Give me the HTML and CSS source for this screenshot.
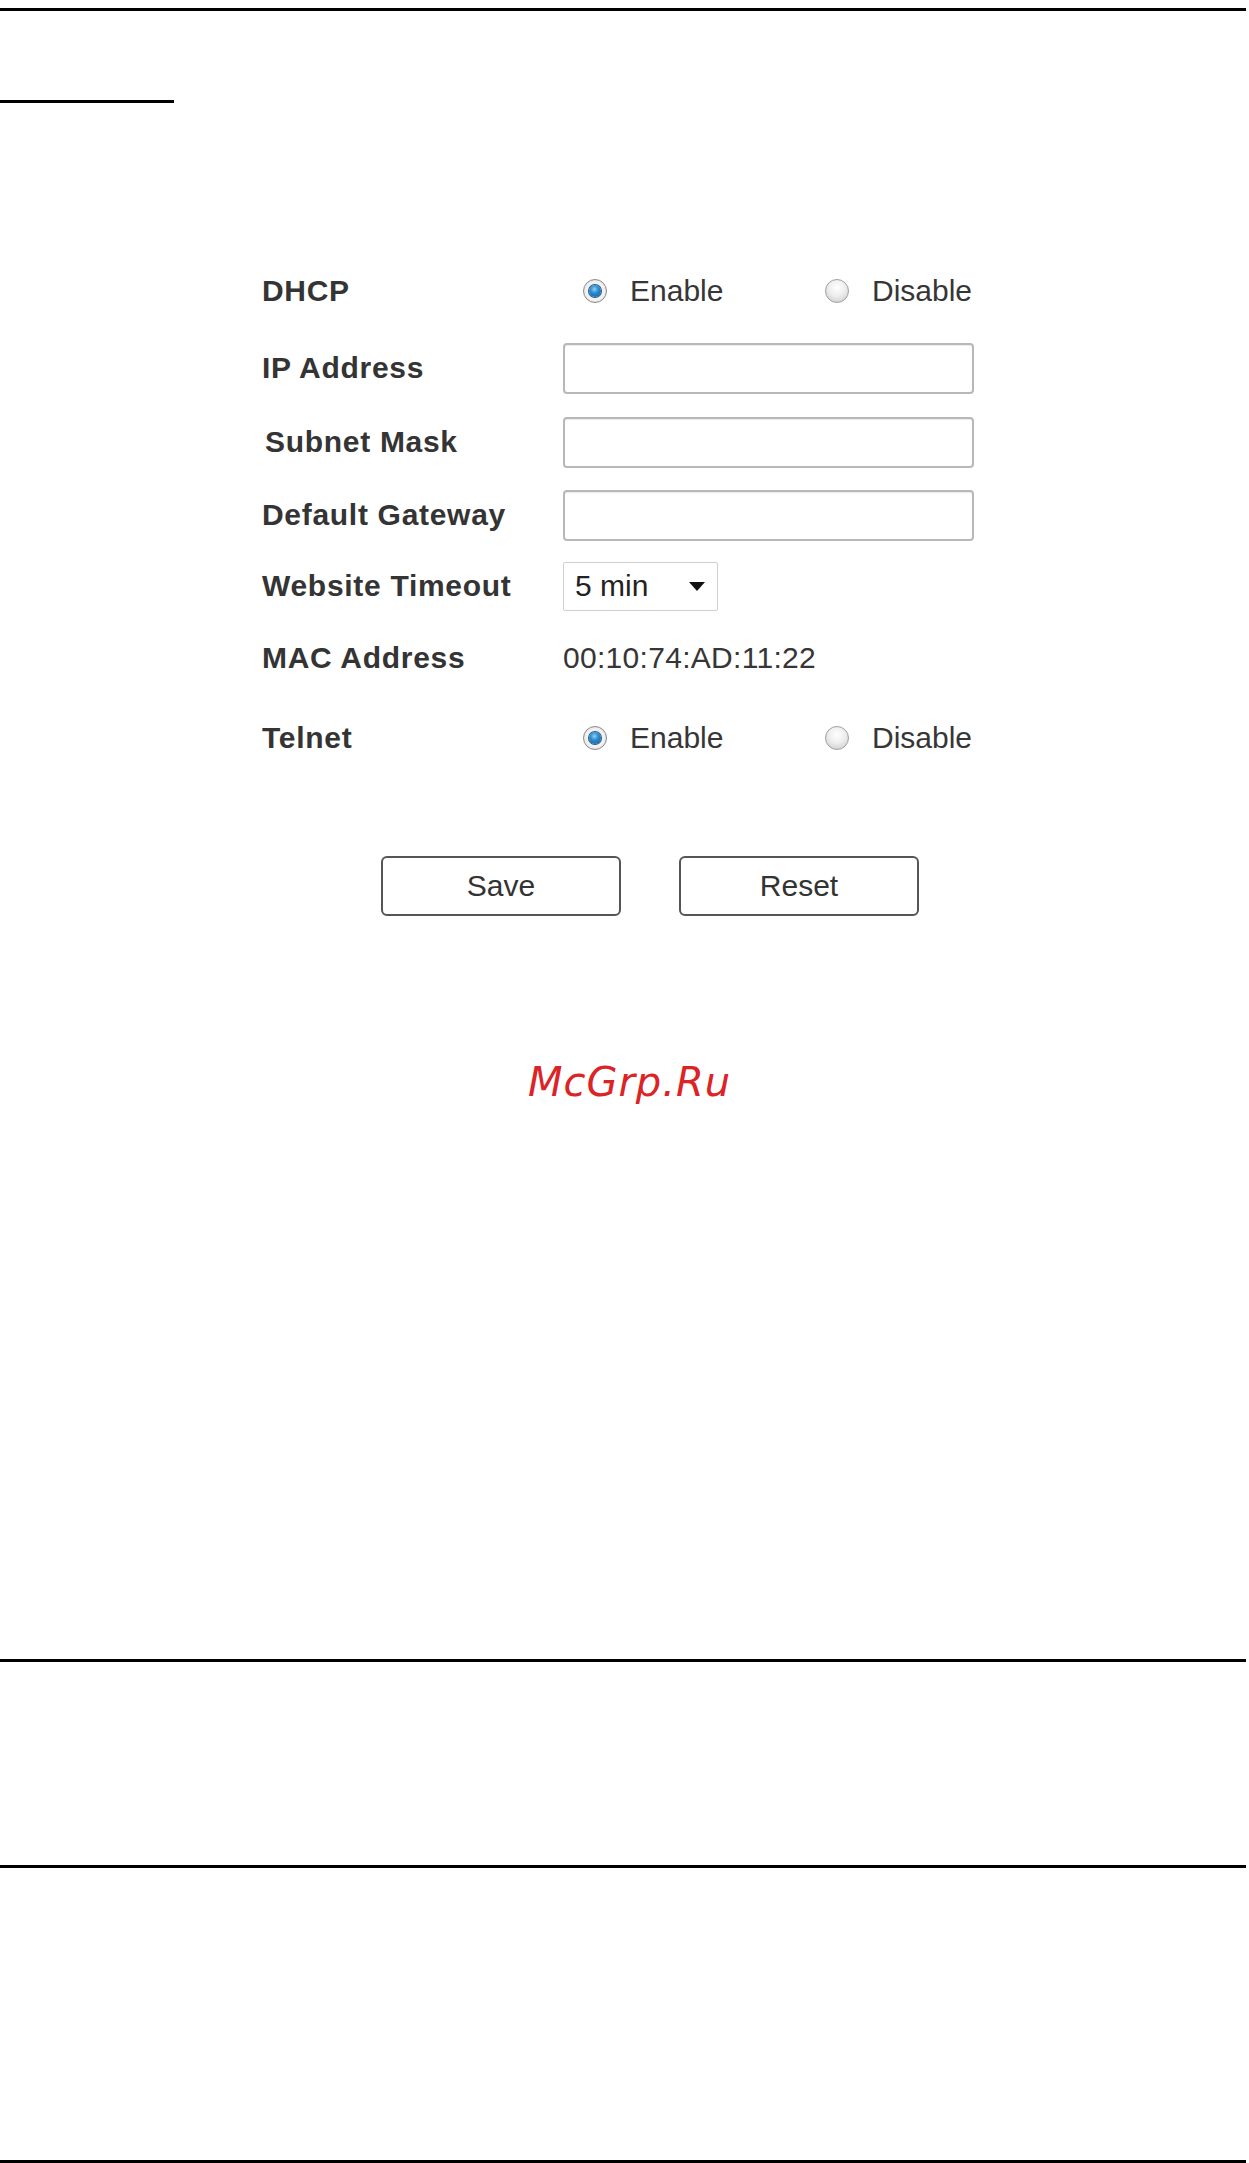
FILE: index.html
```html
<!DOCTYPE html>
<html>
<head>
<meta charset="utf-8">
<title>Network Settings</title>
<link rel="stylesheet" href="styles.css">
</head>
<body>
<div class="rule rule-top"></div>
<div class="rule rule-short"></div>

<form class="settings">
  <div class="label">DHCP</div>
  <div class="field radios">
    <label class="opt"><span class="radio on"></span><span class="opt-text">Enable</span></label>
    <label class="opt"><span class="radio"></span><span class="opt-text">Disable</span></label>
  </div>

  <div class="label">IP Address</div>
  <div class="field"><div class="textbox"></div></div>

  <div class="label indent">Subnet Mask</div>
  <div class="field"><div class="textbox"></div></div>

  <div class="label">Default Gateway</div>
  <div class="field"><div class="textbox"></div></div>

  <div class="label">Website Timeout</div>
  <div class="field"><div class="select"><span>5 min</span><span class="caret"></span></div></div>

  <div class="label">MAC Address</div>
  <div class="field value">00:10:74:AD:11:22</div>

  <div class="label">Telnet</div>
  <div class="field radios">
    <label class="opt"><span class="radio on"></span><span class="opt-text">Enable</span></label>
    <label class="opt"><span class="radio"></span><span class="opt-text">Disable</span></label>
  </div>
</form>

<div class="buttons">
  <div class="btn">Save</div>
  <div class="btn">Reset</div>
</div>

<div class="watermark">McGrp.Ru</div>

<div class="rule rule-mid1"></div>
<div class="rule rule-mid2"></div>
<div class="rule rule-bottom"></div>
</body>
</html>
```
FILE: styles.css
```css
html, body {
  margin: 0;
  padding: 0;
  background: #ffffff;
}
body {
  width: 1249px;
  font-family: "Liberation Sans", Arial, sans-serif;
  color: #333333;
}
.rule {
  height: 3px;
  background: #000000;
  width: 1246px;
}
.rule-top { margin-top: 8px; }
.rule-short { margin-top: 89px; width: 174px; }

.settings {
  margin-top: 149px;
  padding-left: 262px;
  display: grid;
  grid-template-columns: 301px 420px;
  grid-template-rows: 78px 76px 72px 74px 68px 76px 84px;
  align-items: center;
}
.label {
  font-size: 30px;
  font-weight: bold;
  letter-spacing: 0.7px;
  color: #343434;
  line-height: 36px;
}
.label.indent { padding-left: 3px; }
.field {
  font-size: 30px;
  line-height: 36px;
  color: #363636;
}
.value { letter-spacing: 0.3px; }
.radios {
  display: grid;
  grid-template-columns: 242px auto;
  align-items: center;
  padding-left: 20px;
}
.opt {
  display: flex;
  align-items: center;
}
.radio {
  width: 24px;
  height: 24px;
  border-radius: 50%;
  box-sizing: border-box;
  border: 1px solid #a0a0a0;
  background: radial-gradient(circle at 50% 35%, #ffffff 0%, #eeeeee 45%, #c6c6c6 100%);
  margin-right: 23px;
  position: relative;
}
.radio.on {
  border-color: #8a8a8a;
  background: radial-gradient(circle at 50% 50%, #ffffff 0%, #f0f0f0 60%, #cccccc 100%);
}
.radio.on::after {
  content: "";
  position: absolute;
  left: 5px;
  top: 5px;
  width: 12px;
  height: 12px;
  border-radius: 50%;
  background: radial-gradient(circle at 45% 35%, #8fd0f5 0%, #2a8ad0 40%, #0e5a92 100%);
  box-shadow: 0 0 0 1px #23597f;
}
.textbox {
  width: 411px;
  height: 51px;
  box-sizing: border-box;
  border: 2px solid #b8b8b8;
  border-radius: 4px;
  background: #ffffff;
  box-shadow: inset 0 1px 1px rgba(0,0,0,0.08);
}
.select {
  width: 155px;
  height: 49px;
  box-sizing: border-box;
  border: 1px solid #cfcfcf;
  border-radius: 2px;
  display: flex;
  align-items: center;
  justify-content: space-between;
  padding: 0 12px 0 11px;
  font-size: 30px;
  color: #222222;
}
.caret {
  width: 0;
  height: 0;
  border-left: 8px solid transparent;
  border-right: 8px solid transparent;
  border-top: 9px solid #111111;
}

.buttons {
  margin-top: 76px;
  padding-left: 381px;
  display: flex;
  gap: 58px;
}
.btn {
  width: 240px;
  height: 60px;
  box-sizing: border-box;
  border: 2px solid #555555;
  border-radius: 6px;
  background: #ffffff;
  display: flex;
  align-items: center;
  justify-content: center;
  font-size: 30px;
  color: #333333;
}

.watermark {
  margin-top: 141px;
  height: 50px;
  line-height: 50px;
  text-align: center;
  padding-left: 10px;
  font-family: "DejaVu Sans", sans-serif;
  font-style: oblique;
  font-size: 40px;
  letter-spacing: 1px;
  color: #dc2326;
}

.rule-mid1 { margin-top: 552px; }
.rule-mid2 { margin-top: 203px; }
.rule-bottom { margin-top: 292px; }
```
